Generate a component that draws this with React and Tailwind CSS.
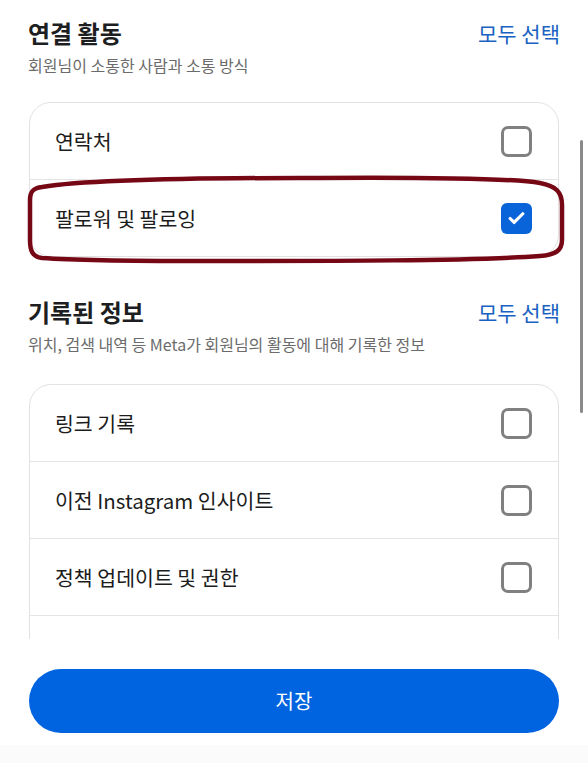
import { Check } from "lucide-react";

const FONT = { fontFamily: '"Noto Sans CJK KR", "Noto Sans", sans-serif' };

const sections = [
  {
    title: "연결 활동",
    desc: "회원님이 소통한 사람과 소통 방식",
    gap: "mt-[26px]",
    items: [
      { label: "연락처", checked: false },
      { label: "팔로워 및 팔로잉", checked: true },
    ],
  },
  {
    title: "기록된 정보",
    desc: "위치, 검색 내역 등 Meta가 회원님의 활동에 대해 기록한 정보",
    gap: "mt-[29px]",
    items: [
      { label: "링크 기록", checked: false },
      { label: "이전 Instagram 인사이트", checked: false },
      { label: "정책 업데이트 및 권한", checked: false },
      { label: "", checked: false },
    ],
  },
];

function Checkbox({ checked }) {
  if (checked) {
    return (
      <div className="w-[31px] h-[31px] rounded-[6px] bg-[#0a64d9] flex items-center justify-center">
        <Check className="w-[19px] h-[19px] text-white" strokeWidth={4} />
      </div>
    );
  }
  return <div className="w-[31px] h-[31px] rounded-[7px] border-[3px] border-[#808080]" />;
}

function Section({ title, desc, items, gap, first }) {
  return (
    <section className={first ? "pt-[18px]" : "pt-[40px]"}>
      <div className="flex items-center justify-between h-[30px] px-[28px]">
        <h2 className="text-[24px] leading-[30px] font-bold text-[#1c1e21]">{title}</h2>
        <button className="text-[21px] leading-[30px] text-[#1a62c2]">모두 선택</button>
      </div>
      <p className="mt-[6px] px-[28px] text-[16px] leading-[22px] text-[#6b6b6b]">{desc}</p>
      <div className={`${gap} mx-[29px] border border-[#e2e2e2] rounded-[22px] bg-white`}>
        {items.map((item, i) => (
          <div
            key={i}
            className={`flex items-center justify-between pl-[25px] pr-[26px] ${
              i > 0 ? "border-t border-[#e4e4e4] h-[77px]" : "h-[76px]"
            }`}
          >
            <span className="text-[20.5px] text-[#1c1c1c]">{item.label}</span>
            {item.label && <Checkbox checked={item.checked} />}
          </div>
        ))}
      </div>
    </section>
  );
}

export default function App() {
  return (
    <div className="relative w-[588px] h-[763px] bg-white flex flex-col overflow-hidden" style={FONT}>
      <div className="flex-1 overflow-hidden">
        {sections.map((s, i) => (
          <Section key={s.title} {...s} first={i === 0} />
        ))}
      </div>

      <div className="bg-white pt-[30px] pb-[12px] px-[29px]">
        <button className="w-full h-[64px] rounded-full bg-[#0064e0] text-white text-[20px]">
          저장
        </button>
      </div>
      <div className="h-[18px] bg-[#fbfbfb]" />

      {/* scroll indicator */}
      <div className="absolute left-[580px] top-[140px] w-[3px] h-[273px] rounded-full bg-[#8a8a8a]" />

      {/* hand-drawn highlight around the selected row */}
      <svg className="absolute left-0 top-0 pointer-events-none" width="588" height="763">
        <path
          d="M42 187 C80 181 160 178 300 178 C430 177 510 178 540 183 C556 186 562 192 562 205 L562 240 C562 250 556 255 540 256 C470 261 330 261 200 261 C120 261 70 260 42 258 C32 257 30 250 30 240 L30 200 C30 191 34 188 42 187 Z"
          fill="none"
          stroke="#760816"
          strokeWidth="4.5"
        />
      </svg>
    </div>
  );
}
